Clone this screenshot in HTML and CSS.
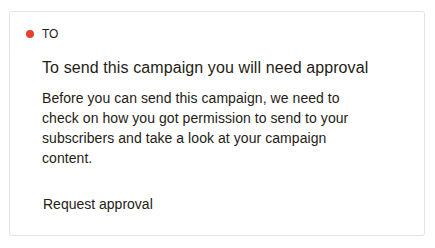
FILE: index.html
```html
<!DOCTYPE html>
<html lang="en">
<head>
<meta charset="utf-8">
<link rel="stylesheet" href="styles.css">
</head>
<body>
<section class="card">
  <div class="label"><span class="dot"></span><span class="label-text">TO</span></div>
  <div class="content">
    <h2 class="title">To send this campaign you will need approval</h2>
    <p class="desc">Before you can send this campaign, we need to check on how you got permission to send to your subscribers and take a look at your campaign content.</p>
    <button class="action" type="button">Request approval</button>
  </div>
</section>
</body>
</html>
```

FILE: styles.css
```css
html, body {
  margin: 0;
  padding: 0;
  background: #ffffff;
}
body {
  font-family: "Liberation Sans", Arial, sans-serif;
  color: #241c15;
  padding: 11px 10px 11px 9px;
}
.card {
  border: 1px solid #e3e3e6;
  border-radius: 3px;
  height: 225px;
  box-sizing: border-box;
  padding: 14px 16px 0 16px;
}
.label {
  display: flex;
  align-items: center;
  gap: 8px;
  height: 16px;
}
.dot {
  width: 8px;
  height: 8px;
  border-radius: 50%;
  background: #e2412f;
}
.label-text {
  font-size: 12px;
  line-height: 16px;
}
.content {
  padding-left: 16px;
}
.title {
  margin: 14px 0 0 0;
  font-size: 16px;
  font-weight: normal;
  line-height: 24px;
  letter-spacing: 0.1px;
}
.desc {
  margin: 8px 0 0 0;
  font-size: 14px;
  line-height: 20px;
  letter-spacing: 0.06px;
  max-width: 320px;
}
.action {
  display: block;
  margin: 26px 0 0 0;
  padding: 0 0 0 1px;
  border: 0;
  background: none;
  font-family: inherit;
  font-size: 14px;
  line-height: 20px;
  color: inherit;
  cursor: pointer;
}
```
